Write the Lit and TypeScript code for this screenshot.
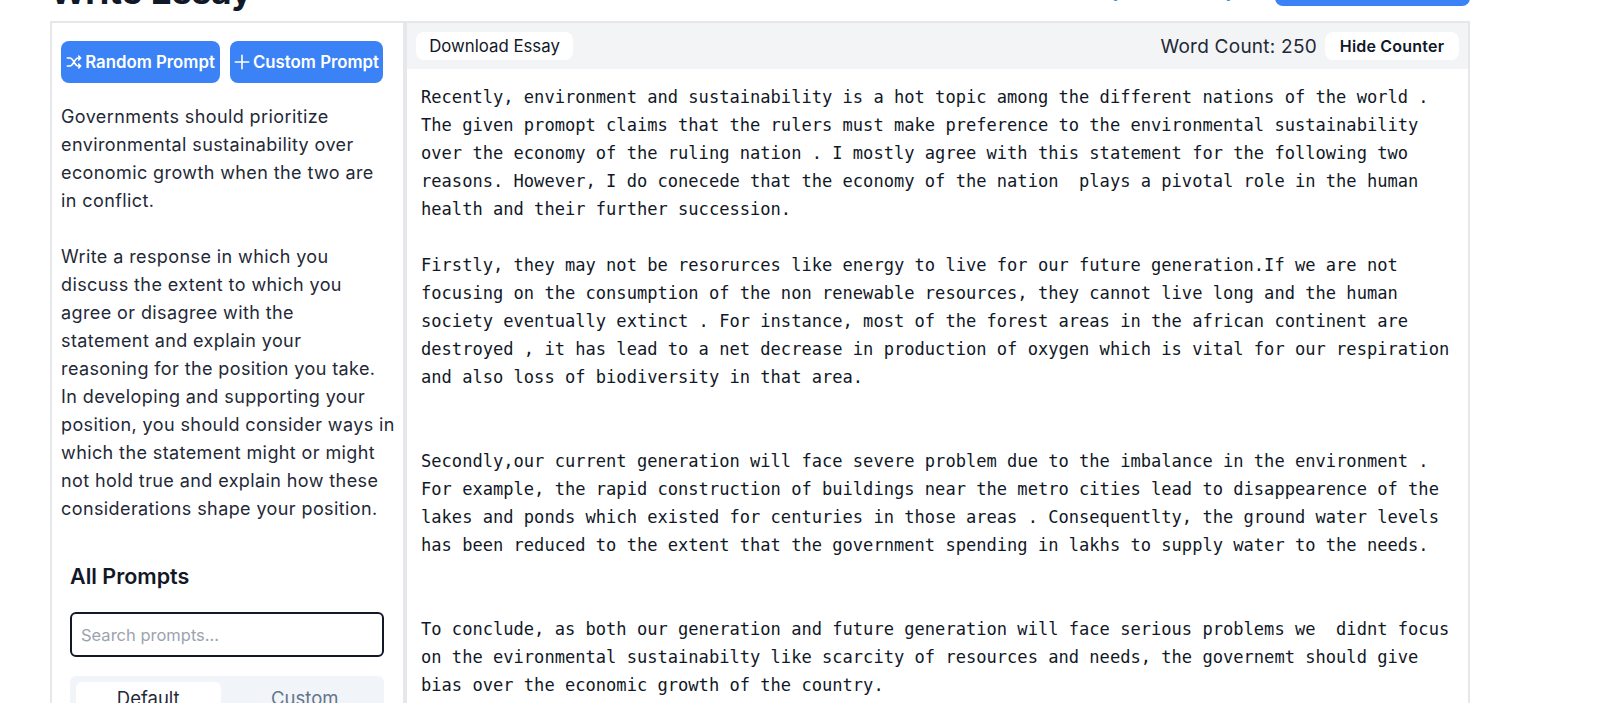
import { LitElement, html, css } from 'lit';
import { customElement } from 'lit/decorators.js';

// line breaks kept by hand, the stand-in font wraps differently
const PROMPT = `Governments should prioritize
environmental sustainability over
economic growth when the two are
in conflict.

Write a response in which you
discuss the extent to which you
agree or disagree with the
statement and explain your
reasoning for the position you take.
In developing and supporting your
position, you should consider ways in
which the statement might or might
not hold true and explain how these
considerations shape your position.`;

const ESSAY = `Recently, environment and sustainability is a hot topic among the different nations of the world . The given promopt claims that the rulers must make preference to the environmental sustainability over the economy of the ruling nation . I mostly agree with this statement for the following two reasons. However, I do conecede that the economy of the nation  plays a pivotal role in the human health and their further succession.

Firstly, they may not be resorurces like energy to live for our future generation.If we are not focusing on the consumption of the non renewable resources, they cannot live long and the human society eventually extinct . For instance, most of the forest areas in the african continent are destroyed , it has lead to a net decrease in production of oxygen which is vital for our respiration and also loss of biodiversity in that area.


Secondly,our current generation will face severe problem due to the imbalance in the environment . For example, the rapid construction of buildings near the metro cities lead to disappearence of the lakes and ponds which existed for centuries in those areas . Consequentlty, the ground water levels has been reduced to the extent that the government spending in lakhs to supply water to the needs.


To conclude, as both our generation and future generation will face serious problems we  didnt focus on the evironmental sustainabilty like scarcity of resources and needs, the governemt should give bias over the economic growth of the country.`;

@customElement('app-root')
export class AppRoot extends LitElement {
  static styles = css`
    :host {
      display: block;
      height: 703px;
      overflow: hidden;
      background: #fff;
      font-family: 'Inter', 'Noto Sans', sans-serif;
      color: #1f2937;
    }

    .page {
      width: 1420px;
      margin-left: 50px;
      margin-top: -38px;
    }

    .top {
      display: flex;
      align-items: flex-end;
      justify-content: space-between;
      height: 44px;
      margin-bottom: 15px;
    }

    h1 {
      margin: 0 0 -7px;
      font-size: 35px;
      line-height: 44px;
      font-weight: 700;
      color: #111827;
    }

    .top-actions {
      display: flex;
      align-items: flex-end;
      gap: 30px;
    }

    .top-link {
      color: #3b82f6;
      font-size: 18px;
      line-height: 24px;
      margin-bottom: 3px;
    }

    .top-btn {
      width: 195px;
      height: 44px;
      border-radius: 8px;
      background: #3b82f6;
    }

    .panel {
      display: flex;
      width: 1420px;
      height: 700px;
      border: 2px solid #e5e7eb;
      border-bottom: 0;
      box-sizing: border-box;
    }

    .side {
      width: 355px;
      box-sizing: border-box;
      padding: 18px 14px 0 9px;
      border-right: 4px solid #e5e7eb;
      flex: none;
    }

    .btns {
      display: flex;
      gap: 10px;
    }

    .btn {
      display: flex;
      align-items: center;
      justify-content: center;
      gap: 3px;
      height: 42px;
      border: 0;
      border-radius: 8px;
      padding: 0;
      background: #3b82f6;
      color: #fff;
      font: 600 16.8px 'Inter', sans-serif;
      white-space: nowrap;
    }

    .btn.random { width: 159px; }
    .btn.custom { width: 153px; }

    .prompt {
      margin: 20px 0 0;
      white-space: pre;
      font-size: 18px;
      letter-spacing: 0.4px;
      line-height: 28px;
      color: #1f2937;
    }

    h2 {
      margin: 39px 0 0 9px;
      font-size: 21.5px;
      line-height: 28px;
      font-weight: 600;
      color: #111827;
    }

    .search {
      display: block;
      width: 314px;
      height: 45px;
      margin: 22px 0 0 9px;
      box-sizing: border-box;
      border: 2px solid #111827;
      border-radius: 6px;
      padding: 0 9px;
      font: 16.5px 'Inter', sans-serif;
      outline: none;
    }

    .search::placeholder { color: #9ca3af; }

    .tabs {
      display: flex;
      gap: 12px;
      width: 314px;
      margin: 19px 0 0 9px;
      padding: 6px 7px 6px 6px;
      box-sizing: border-box;
      background: #f1f5f9;
      border-radius: 6px;
    }

    .tab {
      flex: 1;
      height: 40px;
      line-height: 32px;
      text-align: center;
      font-size: 18.5px;
      color: #64748b;
      border-radius: 6px;
    }

    .tab.active {
      background: #fff;
      color: #1f2937;
    }

    .main {
      flex: 1;
      min-width: 0;
    }

    .bar {
      display: flex;
      align-items: center;
      justify-content: space-between;
      height: 46px;
      padding: 0 9px;
      background: #f3f4f6;
    }

    .bar-right {
      display: flex;
      align-items: center;
      gap: 8px;
    }

    .count {
      font-size: 19px;
      letter-spacing: 0.25px;
      color: #1f2937;
    }

    .pill {
      height: 28px;
      border: 0;
      padding: 0;
      border-radius: 8px;
      background: #fff;
      color: #111827;
      font: 16.8px 'Inter', sans-serif;
    }

    .pill.dl { width: 157px; }
    .pill.hide {
      width: 134px;
      font-weight: 600;
      font-size: 16px;
      letter-spacing: 0.2px;
    }

    .essay {
      padding: 14px 12px 14px 14px;
      white-space: pre-wrap;
      font-family: 'DejaVu Sans Mono', monospace;
      font-size: 17.08px;
      line-height: 28px;
      color: #111827;
    }
  `;

  render() {
    return html`
      <div class="page">
        <div class="top">
          <h1>Write Essay</h1>
          <div class="top-actions">
            <span class="top-link">My Saved Essays</span>
            <div class="top-btn"></div>
          </div>
        </div>
        <div class="panel">
          <div class="side">
            <div class="btns">
              <button class="btn random">
                <svg width="16" height="16" viewBox="0 0 24 24" fill="none" stroke="currentColor" stroke-width="2.4" stroke-linecap="round" stroke-linejoin="round">
                  <path d="M2 6h4c5 0 7 12 12 12h4M2 18h4c5 0 7-12 12-12h4M19 3l3 3-3 3M19 15l3 3-3 3" />
                </svg>
                Random Prompt
              </button>
              <button class="btn custom">
                <svg width="16" height="16" viewBox="0 0 24 24" fill="none" stroke="currentColor" stroke-width="2.4" stroke-linecap="round">
                  <path d="M12 2v20M2 12h20" />
                </svg>
                Custom Prompt
              </button>
            </div>
            <p class="prompt">${PROMPT}</p>
            <h2>All Prompts</h2>
            <input class="search" placeholder="Search prompts..." />
            <div class="tabs">
              <div class="tab active">Default</div>
              <div class="tab">Custom</div>
            </div>
          </div>
          <div class="main">
            <div class="bar">
              <button class="pill dl">Download Essay</button>
              <div class="bar-right">
                <span class="count">Word Count: 250</span>
                <button class="pill hide">Hide Counter</button>
              </div>
            </div>
            <div class="essay">${ESSAY}</div>
          </div>
        </div>
      </div>
    `;
  }
}
